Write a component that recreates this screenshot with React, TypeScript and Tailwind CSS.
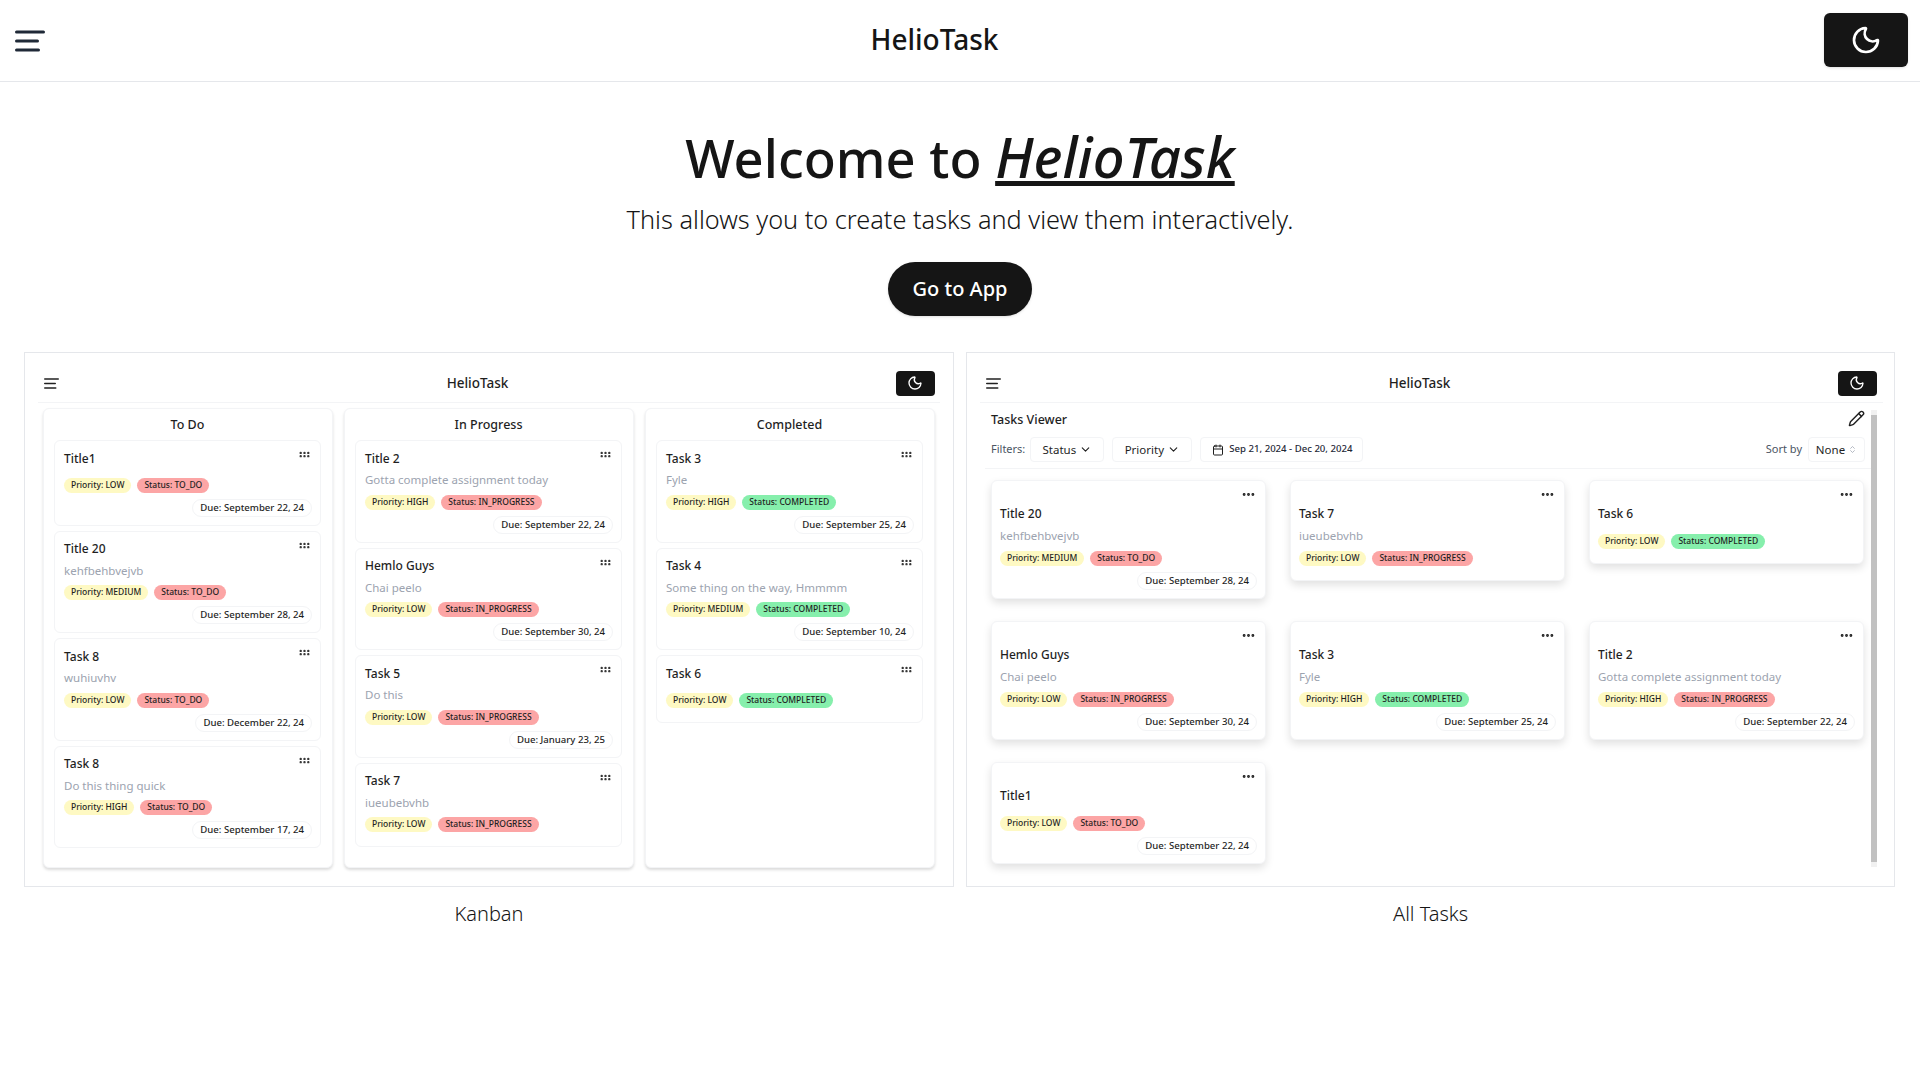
import { Calendar, ChevronDown, ChevronsUpDown, Ellipsis, GripHorizontal, Moon, Pencil } from 'lucide-react'

type Task = {
  title: string
  desc?: string
  priority: string
  status: string
  due?: string
}

const todo: Task[] = [
  { title: 'Title1', priority: 'LOW', status: 'TO_DO', due: 'September 22, 24' },
  { title: 'Title 20', desc: 'kehfbehbvejvb', priority: 'MEDIUM', status: 'TO_DO', due: 'September 28, 24' },
  { title: 'Task 8', desc: 'wuhiuvhv', priority: 'LOW', status: 'TO_DO', due: 'December 22, 24' },
  { title: 'Task 8', desc: 'Do this thing quick', priority: 'HIGH', status: 'TO_DO', due: 'September 17, 24' },
]

const inProgress: Task[] = [
  { title: 'Title 2', desc: 'Gotta complete assignment today', priority: 'HIGH', status: 'IN_PROGRESS', due: 'September 22, 24' },
  { title: 'Hemlo Guys', desc: 'Chai peelo', priority: 'LOW', status: 'IN_PROGRESS', due: 'September 30, 24' },
  { title: 'Task 5', desc: 'Do this', priority: 'LOW', status: 'IN_PROGRESS', due: 'January 23, 25' },
  { title: 'Task 7', desc: 'iueubebvhb', priority: 'LOW', status: 'IN_PROGRESS' },
]

const completed: Task[] = [
  { title: 'Task 3', desc: 'Fyle', priority: 'HIGH', status: 'COMPLETED', due: 'September 25, 24' },
  { title: 'Task 4', desc: 'Some thing on the way, Hmmmm', priority: 'MEDIUM', status: 'COMPLETED', due: 'September 10, 24' },
  { title: 'Task 6', priority: 'LOW', status: 'COMPLETED' },
]

const allTasks: Task[] = [
  todo[1],
  inProgress[3],
  completed[2],
  inProgress[1],
  completed[0],
  inProgress[0],
  todo[0],
]

const Hamburger = ({ className }: { className: string }) => (
  <svg viewBox="0 0 30 22" fill="none" stroke="currentColor" strokeWidth="3" strokeLinecap="round" className={className}>
    <path d="M1.5 2h27M1.5 11h21M1.5 20h22" />
  </svg>
)

const TaskCard = ({ task, grid }: { task: Task; grid?: boolean }) => (
  <div
    className={`relative rounded-[6px] border border-[#f3f4f6] bg-white pr-[8px] ${grid ? 'pl-[8px] pt-[24px] shadow-[0_4px_8px_rgba(0,0,0,0.12)]' : 'pl-[9px] pt-[8.5px]'} ${task.due ? 'pb-[8px]' : 'pb-[14px]'}`}
  >
    {grid ? (
      <Ellipsis size={15} strokeWidth={2.6} className="absolute right-[9px] top-[6px] text-[#222]" />
    ) : (
      <GripHorizontal size={13} strokeWidth={2.4} className="absolute right-[9px] top-[7px] text-[#333]" />
    )}
    <div className="flex h-[18px] items-center text-[12px] font-medium leading-none text-[#1f1f1f]">{task.title}</div>
    {task.desc && (
      <div className="mt-[4px] flex h-[17px] items-center text-[11.5px] leading-none text-[#9ca3af]">{task.desc}</div>
    )}
    <div className={`flex gap-[6px] ${task.desc ? (grid ? 'mt-[7px]' : 'mt-[6px]') : grid ? 'mt-[11px]' : 'mt-[10px]'}`}>
      <span className="flex h-[15px] items-center rounded-full bg-[#fef9c3] px-[7px] text-[8.5px] font-medium leading-none text-[#1f1f1f]">
        Priority: {task.priority}
      </span>
      <span
        className={`flex h-[15px] items-center rounded-full px-[7px] text-[8.5px] font-medium leading-none text-[#1f1f1f] ${task.status === 'COMPLETED' ? 'bg-[#86efac]' : 'bg-[#fca5a5]'}`}
      >
        Status: {task.status}
      </span>
    </div>
    {task.due && (
      <div className="mt-[6px] flex justify-end">
        <span className="flex h-[18px] items-center rounded-full border border-[#f3f4f6] px-[7px] text-[9.6px] font-medium leading-none text-[#1f1f1f]">
          Due: {task.due}
        </span>
      </div>
    )}
  </div>
)

const KanbanColumn = ({ title, tasks }: { title: string; tasks: Task[] }) => (
  <div className="h-[460px] rounded-[6px] border border-[#f3f4f6] bg-white pl-[10px] pr-[11px] shadow-[0_2px_3px_rgba(0,0,0,0.14)]">
    <div className="flex h-[31px] items-center justify-center pt-[2px] text-[12.5px] font-medium text-[#1f1f1f]">{title}</div>
    <div className="flex flex-col gap-[5px]">
      {tasks.map((t) => (
        <TaskCard key={t.title + t.priority} task={t} />
      ))}
    </div>
  </div>
)

const PanelHeader = ({ pr }: { pr: string }) => (
  <div className={`flex h-[50px] items-center justify-between border-b border-[#f3f4f6] pl-[6px] pt-[11px] ${pr}`}>
    <Hamburger className="h-[11px] w-[15px] text-[#222]" />
    <span className="text-[13.5px] font-medium text-[#1f1f1f]">HelioTask</span>
    <button className="flex h-[25px] w-[39px] items-center justify-center rounded-[4px] bg-[#151515] text-white">
      <Moon size={16} />
    </button>
  </div>
)

const Kanban = () => (
  <div className="h-[535px] border border-[#e5e7eb] px-[13px]">
    <PanelHeader pr="pr-[5px]" />
    <div className="grid grid-cols-[290px_290px_290px] gap-[11px] pl-[5px] pt-[5px]">
      <KanbanColumn title="To Do" tasks={todo} />
      <KanbanColumn title="In Progress" tasks={inProgress} />
      <KanbanColumn title="Completed" tasks={completed} />
    </div>
  </div>
)

const FilterButton = ({ label, width }: { label: string; width: string }) => (
  <button
    className={`flex h-[25px] items-center justify-center gap-[3px] rounded-[4px] border border-[#f3f4f6] text-[11.5px] text-[#1f1f1f] ${width}`}
  >
    {label}
    <ChevronDown size={13} />
  </button>
)

const AllTasks = () => (
  <div className="h-[535px] border border-[#e5e7eb] pl-[13px] pr-[11px]">
    <PanelHeader pr="pr-[6px]" />
    <div className="flex h-[464px] pt-[7px]">
      <div className="w-[891px] pl-[5px]">
        <div className="flex h-[21px] items-center justify-between pl-[6px] pr-[6px]">
          <span className="text-[12.5px] font-medium text-[#1f1f1f]">Tasks Viewer</span>
          <Pencil size={17} className="-translate-y-[2px] text-[#1f1f1f]" />
        </div>
        <div className="mt-[6px] flex h-[32px] items-start justify-between border-b border-[#f3f4f6] pl-[6px] pr-[6px]">
          <div className="flex items-center">
            <span className="mr-[5px] text-[11px] text-[#4b5563]">Filters:</span>
            <FilterButton label="Status" width="w-[74px]" />
            <div className="w-[8px]" />
            <FilterButton label="Priority" width="w-[80px]" />
            <div className="w-[8px]" />
            <button className="flex h-[25px] w-[163px] items-center gap-[5px] rounded-[4px] border border-[#f3f4f6] pl-[11px] text-[9.6px] font-medium text-[#1f2937]">
              <Calendar size={12} className="text-[#1f1f1f]" />
              Sep 21, 2024 - Dec 20, 2024
            </button>
          </div>
          <div className="flex items-center">
            <span className="mr-[6px] text-[11px] text-[#4b5563]">Sort by</span>
            <button className="flex h-[25px] w-[57px] items-center justify-center gap-[3px] rounded-[4px] border border-[#f3f4f6] text-[11.5px] text-[#1f1f1f]">
              None
              <ChevronsUpDown size={9} className="text-[#9ca3af]" />
            </button>
          </div>
        </div>
        <div className="ml-[6px] mt-[11px] grid grid-cols-[275px_275px_275px] items-start gap-x-[24px] gap-y-[22px]">
          {allTasks.map((t) => (
            <TaskCard key={t.title} task={t} grid />
          ))}
        </div>
      </div>
      <div className="w-[6px] bg-[#f1f1f1] py-[5px]">
        <div className="h-full bg-[#c1c1c1]" />
      </div>
    </div>
  </div>
)

export default function App() {
  return (
    <div className="min-h-[1080px] bg-white font-['Noto_Sans',sans-serif] text-[#151515]">
      <header className="flex h-[82px] items-center justify-between border-b border-[#e5e7eb] pl-[15px] pr-[12px]">
        <Hamburger className="h-[22px] w-[30px] text-[#1f2937]" />
        <span className="mb-[4px] text-[28px] font-medium">HelioTask</span>
        <button className="mb-[2px] flex h-[54px] w-[84px] items-center justify-center rounded-[6px] bg-[#151515] text-white shadow-sm">
          <Moon size={32} />
        </button>
      </header>
      <main className="flex flex-col items-center">
        <h1 className="mt-[39px] h-[70px] text-[52.5px] font-medium leading-[70px]">
          Welcome to{' '}
          <em className="text-[56px] underline">HelioTask</em>
        </h1>
        <p className="mt-[10px] text-[25.3px] font-light leading-[36px]">This allows you to create tasks and view them interactively.</p>
        <button className="mt-[25px] flex h-[54px] w-[144px] items-center justify-center rounded-full bg-[#151515] text-[20px] font-medium text-white shadow-sm">
          Go to App
        </button>
        <div className="mt-[36px] grid w-full grid-cols-[930px_929px] gap-[12px] pl-[24px]">
          <div>
            <Kanban />
            <div className="mt-[12px] text-center text-[20px] font-light leading-[30px]">Kanban</div>
          </div>
          <div>
            <AllTasks />
            <div className="mt-[12px] text-center text-[20px] font-light leading-[30px]">All Tasks</div>
          </div>
        </div>
      </main>
    </div>
  )
}
